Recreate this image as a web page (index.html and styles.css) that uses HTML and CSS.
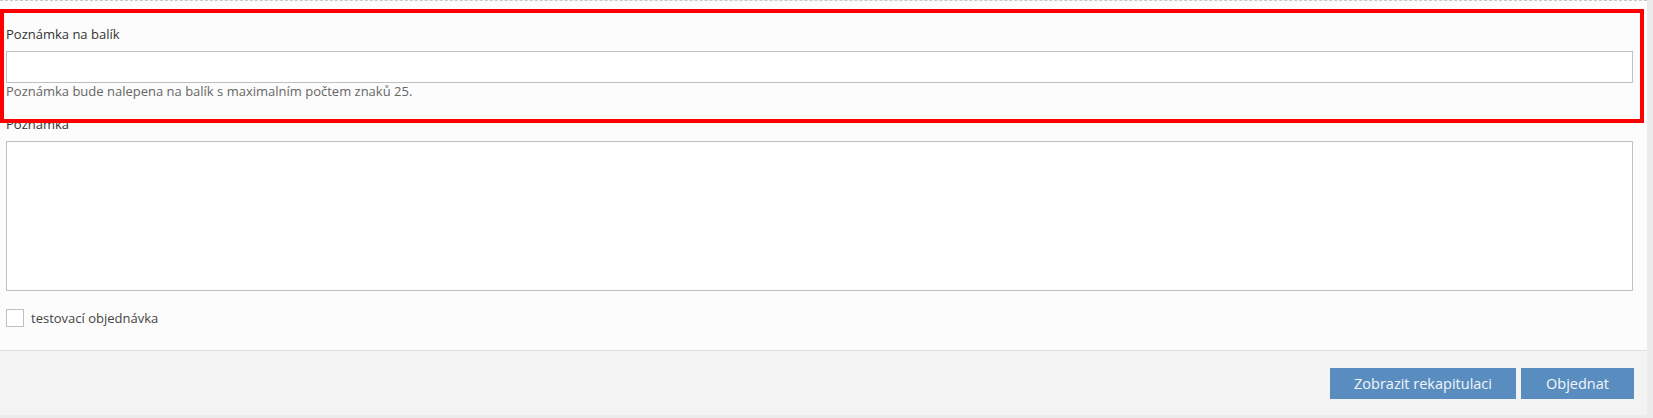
FILE: index.html
```html
<!DOCTYPE html>
<html lang="cs">
<head>
    <meta charset="UTF-8">
    <meta name="viewport" content="width=device-width, initial-scale=1.0">
    <title>Objednávka</title>
    <link rel="stylesheet" href="styles.css">
</head>
<body>
    <div class="stranka">
        <div class="panel">
            <form class="formular">
                <!-- Poznámka na balík (zvýrazněno) -->
                <div class="skupina zvyrazneni">
                    <label for="poznamkaBalik">Poznámka na balík</label>
                    <input type="text" id="poznamkaBalik" maxlength="25">
                    <p class="napoveda">Poznámka bude nalepena na balík s maximalním počtem znaků 25.</p>
                </div>

                <div class="skupina">
                    <label for="poznamka">Poznámka</label>
                    <textarea id="poznamka"></textarea>
                </div>

                <label class="zaskrtavatko">
                    <input type="checkbox" id="testovaci">
                    <span class="ctverec"></span>
                    testovací objednávka
                </label>
            </form>

            <div class="paticka">
                <button type="button" class="rekapitulace">Zobrazit rekapitulaci</button>
                <button type="submit" class="objednat">Objednat</button>
            </div>
        </div>
    </div>
</body>
</html>
```

FILE: styles.css
```css
body {
    font-family: "Open Sans", Arial, sans-serif;
    margin: 0;
    padding: 0;
    background-color: #ececec;
    color: #333;
}
.stranka {
    height: 418px;
    padding-right: 6px;
    box-sizing: border-box;
}
.panel {
    border-top: 1px dashed #c8c8c8;
    background-color: #fcfcfc;
    height: 414px;
    display: flex;
    flex-direction: column;
}
.formular {
    padding: 24px 14px 23px 6px;
    border-bottom: 1px solid #dedede;
}
.skupina {
    display: flex;
    flex-direction: column;
    margin-bottom: 15px;
}
.skupina label {
    font-size: 13px;
    line-height: 18px;
    margin-bottom: 8px;
}
input[type="text"], textarea {
    margin: 0;
    height: 32px;
    box-sizing: border-box;
    border: 1px solid #c0c0c0;
    background: white;
    font-family: inherit;
}
textarea {
    height: 150px;
    resize: none;
}
.napoveda {
    margin: 0;
    font-size: 13px;
    line-height: 17px;
    color: #666;
}
/* rámeček přes první skupinu */
.zvyrazneni {
    position: relative;
}
.zvyrazneni::after {
    content: "";
    position: absolute;
    left: -6px;
    right: -11px;
    top: -16px;
    bottom: -23px;
    border: 4px solid #ff0000;
    pointer-events: none;
}
.skupina:last-of-type {
    margin-bottom: 18px;
}
.zaskrtavatko {
    display: flex;
    align-items: center;
    gap: 7px;
    font-size: 13px;
    line-height: 18px;
    color: #444;
}
.zaskrtavatko input {
    display: none;
}
.ctverec {
    width: 18px;
    height: 18px;
    box-sizing: border-box;
    border: 1px solid #c0c0c0;
    background: white;
}
.paticka {
    flex: 1;
    background-color: #f3f3f3;
    display: flex;
    justify-content: flex-end;
    align-items: flex-start;
    gap: 5px;
    padding: 17px 13px 0 0;
}
.paticka button {
    background-color: #5a8dbf;
    color: #f2f5fa;
    border: none;
    height: 31px;
    padding: 0;
    font-family: inherit;
    font-size: 14.5px;
    cursor: pointer;
}
.rekapitulace {
    width: 186px;
}
.objednat {
    width: 113px;
}
.paticka button:hover {
    background-color: #4a7bab;
}
```
